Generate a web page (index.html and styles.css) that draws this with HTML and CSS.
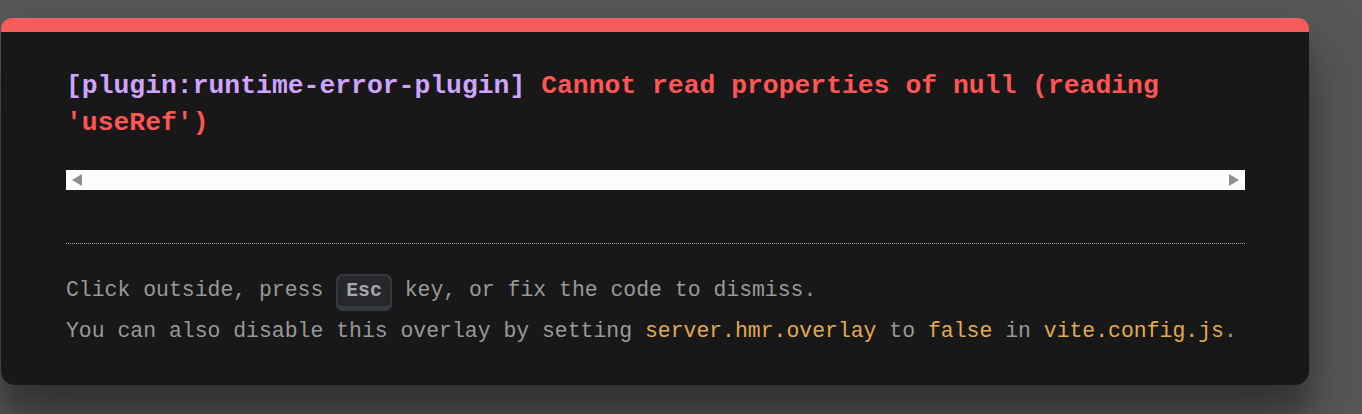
FILE: index.html
```html
<!DOCTYPE html>
<html lang="en">
<head>
<meta charset="utf-8">
<title>Vite error overlay</title>
<link rel="stylesheet" href="styles.css">
</head>
<body>
<div class="backdrop">
  <div class="window">
    <pre class="message"><span class="plugin">[plugin:runtime-error-plugin]</span> <span class="message-body">Cannot read properties of null (reading
'useRef')</span></pre>
    <div class="file-scroll">
      <span class="arrow arrow-left"></span>
      <span class="arrow arrow-right"></span>
    </div>
    <div class="tip">
      Click outside, press <kbd>Esc</kbd> key, or fix the code to dismiss.<br>
      You can also disable this overlay by setting
      <code>server.hmr.overlay</code> to
      <code>false</code> in <code>vite.config.js</code>.
    </div>
  </div>
</div>
</body>
</html>
```

FILE: styles.css
```css
html, body {
  margin: 0;
  padding: 0;
}

body {
  background: #575757;
  width: 1362px;
  height: 414px;
  overflow: hidden;
}

.backdrop {
  padding-top: 18px;
  padding-left: 1px;
}

.window {
  font-family: "Liberation Mono", "DejaVu Sans Mono", monospace;
  width: 1308px;
  box-sizing: border-box;
  padding: 36px 64px 33px 65px;
  background: #181818;
  color: #d8d8d8;
  border-top: 14px solid #f65c5c;
  border-radius: 11px 11px 14px 14px;
  box-shadow: 0 34px 68px rgba(0, 0, 0, 0.30), 0 27px 22px rgba(0, 0, 0, 0.22);
  overflow: hidden;
}

.message {
  margin: 0 0 27px;
  font-family: inherit;
  font-size: 26.4px;
  line-height: 37.4px;
  font-weight: 700;
  white-space: pre-wrap;
  color: #ff5555;
}

.plugin {
  color: #cfa4ff;
}

.message-body {
  color: #ff5555;
}

.file-scroll {
  height: 20px;
  background: #fdfdfd;
  display: flex;
  align-items: center;
  justify-content: space-between;
  padding: 0 6px;
  margin-bottom: 53px;
}

.arrow {
  width: 0;
  height: 0;
  border-top: 6px solid transparent;
  border-bottom: 6px solid transparent;
}

.arrow-left {
  border-right: 10px solid #8f8f8f;
}

.arrow-right {
  border-left: 10px solid #8f8f8f;
}

.tip {
  font-size: 21.45px;
  color: #999999;
  border-top: 1px dotted #999999;
  padding-top: 26px;
  line-height: 41px;
}

code {
  font-family: inherit;
  font-size: 21.45px;
  color: #e2aa53;
}

kbd {
  font-family: "Liberation Mono", "DejaVu Sans Mono", monospace;
  font-size: 19.8px;
  line-height: 28px;
  font-weight: 700;
  background-color: #26282c;
  color: #a6a7ab;
  padding: 4px 8px;
  border-radius: 7px;
  border-style: solid;
  border-color: #363940;
  border-width: 2px 2px 5px;
}
```
